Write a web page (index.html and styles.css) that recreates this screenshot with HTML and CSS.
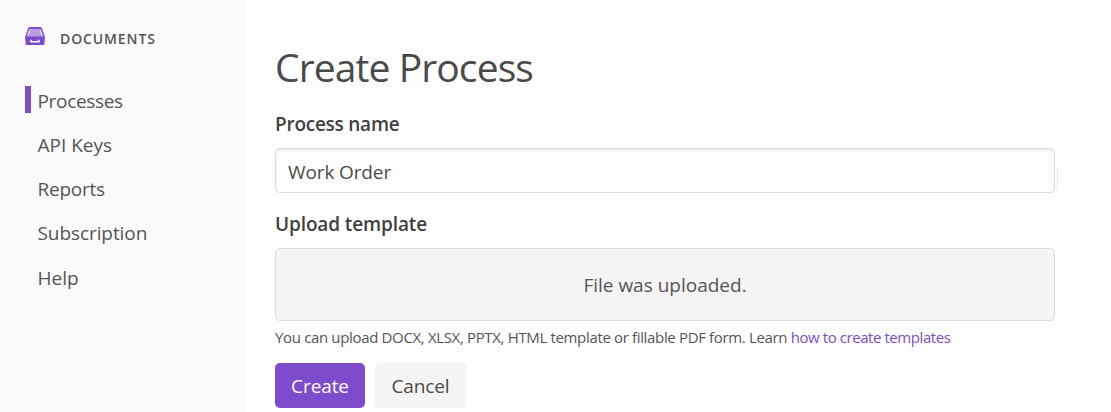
FILE: index.html
```html
<!DOCTYPE html>
<html lang="en">
<head>
<meta charset="utf-8">
<title>Create Process</title>
<link rel="stylesheet" href="styles.css">
</head>
<body>
<div class="app">
  <aside class="sidebar">
    <div class="brand">
      <svg class="brand-icon" width="20" height="18" viewBox="0 0 20 18">
        <path fill="#b79be3" d="M4 1h12l3 9H1z"/>
        <path fill="#7e4bcc" d="M4 0h12l1 2H3z"/>
        <path fill="none" stroke="#7e4bcc" stroke-width="1.3" d="M3.9 1L.8 10M16.1 1l3.1 9"/>
        <path fill="none" stroke="#f1eafa" stroke-width="1" d="M5 2.8L3 8.600M15 2.800l2 5.800"/>
        <path fill="#7e4bcc" d="M0 9.500h20l-.6 7.500q-.1 1-1 1H1.600q-.9 0-1-1z"/>
        <path fill="none" stroke="#fff" stroke-width="1.500" d="M6 12.800v2h8v-2"/>
      </svg>
      <span class="brand-name">DOCUMENTS</span>
    </div>
    <nav class="nav">
      <a class="nav-item active"><span class="t-processes">Processes</span></a>
      <a class="nav-item"><span class="t-keys">API Keys</span></a>
      <a class="nav-item"><span class="t-reports">Reports</span></a>
      <a class="nav-item"><span class="t-subscription">Subscription</span></a>
      <a class="nav-item"><span class="t-help">Help</span></a>
    </nav>
  </aside>
  <main class="content">
    <h1 class="title"><span>Create Process</span></h1>
    <label class="label"><span class="t-name">Process name</span></label>
    <div class="field"><div class="input"><span class="t-work">Work Order</span></div><i class="edge"></i></div>
    <label class="label label-upload"><span class="t-upload">Upload template</span></label>
    <div class="dropzone"><span class="t-file">File was uploaded.</span></div>
    <p class="hint"><span class="t-hint">You can upload DOCX, XLSX, PPTX, HTML template or fillable PDF form. Learn </span><a class="link">how to create templates</a></p>
    <div class="actions">
      <div class="btn primary"><span>Create</span></div>
      <div class="btn secondary"><span>Cancel</span></div>
    </div>
  </main>
</div>
</body>
</html>
```
FILE: styles.css
```css
* { box-sizing: border-box; }
body { margin: 0; background: #fff; color: #4a4a4a; font: 19px/28px "Open Sans", "Noto Sans", sans-serif; overflow: hidden; }
.app { display: flex; height: 412px; }
.sidebar { width: 245px; flex: none; background: #fafafa; padding: 26px 0 0 25px; }
.brand { display: flex; gap: 15px; height: 24px; }
.brand-icon { margin-top: 1px; }
.brand-name { font-size: 14px; line-height: 25px; font-weight: 600; letter-spacing: .88px; color: #555; }
.nav { display: flex; flex-direction: column; gap: 17.150px; margin-top: 36px; }
.nav-item { height: 27px; line-height: 30px; padding-left: 12.500px; color: #555; white-space: nowrap; }
.active { border-left: 6px solid #7e4bcc; padding-left: 6.500px; }
.t-processes { letter-spacing: -.33px; }
.t-reports { letter-spacing: -.25px; }
.t-subscription { letter-spacing: -.08px; }
.content { width: 780px; margin-left: 30px; padding-top: 40px; }
.title { margin: 0 0 16px; font-size: 39px; line-height: 54px; font-weight: 400; letter-spacing: -.9px; white-space: nowrap; }
.label { display: block; height: 28px; line-height: 28px; font-weight: 600; color: #404040; }
.t-name { letter-spacing: -.25px; }
.t-upload { letter-spacing: -.12px; }
.t-work { letter-spacing: -.12px; }
.field { position: relative; margin-top: 10px; }
.input { height: 45px; border: 1px solid #dadada; border-radius: 5px; padding-left: 12px; line-height: 46px; box-shadow: inset 0 2px 3px rgba(0,0,0,.08); }
.edge { position: absolute; right: -3px; top: 20px; width: 1px; height: 22px; background: #e9e9f3; }
.label-upload { margin-top: 17px; }
.dropzone { margin-top: 10px; height: 73px; border: 1px solid #dadada; border-radius: 5px; background: #f4f4f4; text-align: center; line-height: 72px; color: #555; }
.hint { margin: 4px 0 0; height: 24px; font-size: 15px; line-height: 24px; white-space: nowrap; color: #555; }
.t-hint { letter-spacing: -.345px; }
.link { color: #7e4bcc; letter-spacing: -.43px; }
.actions { display: flex; gap: 10px; margin-top: 14px; }
.btn { height: 45px; line-height: 46px; border-radius: 5px; text-align: center; }
.primary { width: 90px; background: #7e4bcc; color: #fff; font-weight: 500; letter-spacing: -.1px; }
.secondary { width: 91px; background: #f4f4f4; letter-spacing: -.1px; }
```
